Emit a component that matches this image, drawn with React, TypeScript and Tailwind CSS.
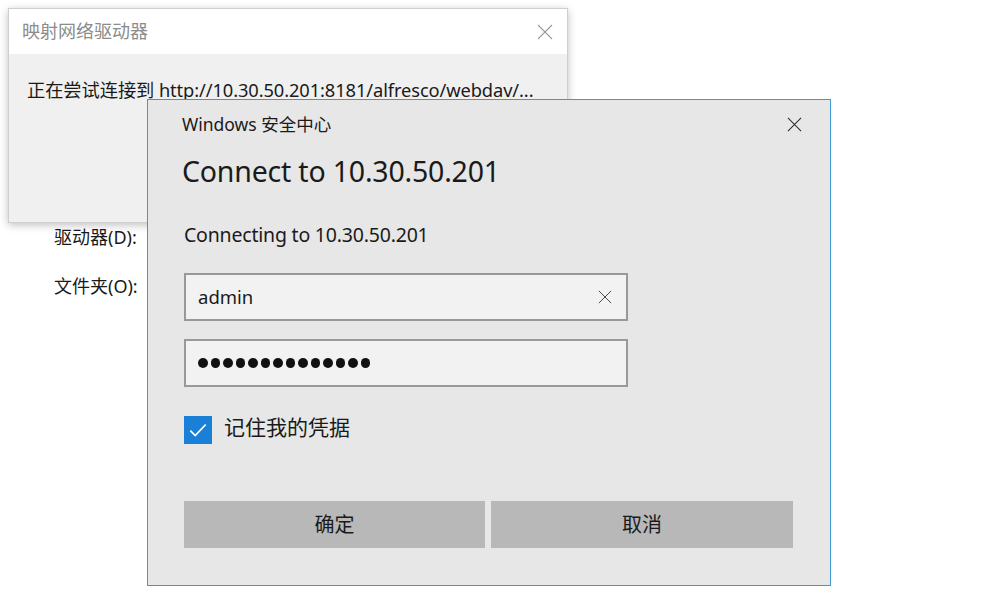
const font = {
    fontFamily: '"Noto Sans", "Noto Sans CJK SC", sans-serif',
}

function CloseIcon({ className }: { className: string }) {
    return (
        <svg viewBox="0 0 16 16" className={className} fill="none" stroke="currentColor" strokeWidth={1.1}>
            <path d="M1 1L15 15M15 1L1 15" />
        </svg>
    )
}

// the progress window that sits behind the credential prompt
function MapDriveWindow() {
    return (
        <div className="absolute left-[8px] top-[8px] w-[560px] h-[215px] flex flex-col border border-[#cfcfcf] bg-[#f0f0f0] shadow-[0_2px_8px_rgba(0,0,0,0.25)]">
            <div className="h-[45px] bg-white flex items-center justify-between pl-[13px] pr-[14px]">
                <span className="text-[18px] text-[#8c8c8c]">映射网络驱动器</span>
                <CloseIcon className="w-[16px] h-[16px] text-[#9a9a9a]" />
            </div>
            <div className="pl-[18px] pt-[22px] text-[18.3px] text-[#1a1a1a] whitespace-nowrap tracking-[-0.1px]">
                正在尝试连接到 http://10.30.50.201:8181/alfresco/webdav/...
            </div>
        </div>
    )
}

function SecurityDialog() {
    return (
        <div className="absolute left-[147px] top-[99px] w-[684px] h-[487px] border border-[#3d9ad1] bg-[#e7e7e7] flex flex-col pl-[36px] pr-[36px]">
            <div className="flex items-center justify-between h-[49px]">
                <span className="text-[17.5px] text-[#1a1a1a] -ml-[2px] -mt-[1px]">Windows 安全中心</span>
                <CloseIcon className="w-[15px] h-[15px] text-[#2a2a2a] -mr-[8px] -mt-[1px]" />
            </div>
            <div className="text-[28.5px] text-[#1a1a1a] leading-[36px] -ml-[2px] mt-[4px] tracking-[-0.2px]">
                Connect to 10.30.50.201
            </div>
            <div className="text-[19.5px] text-[#1a1a1a] leading-[26px] mt-[33px] tracking-[-0.2px]">
                Connecting to 10.30.50.201
            </div>
            <div className="mt-[25px] w-[444px] h-[48px] border-2 border-[#999999] bg-[#f2f2f2] flex items-center justify-between pl-[12px] pr-[14px]">
                <span className="text-[18.5px] text-[#1a1a1a]">admin</span>
                <CloseIcon className="w-[14px] h-[14px] text-[#444444]" />
            </div>
            <div className="mt-[18px] w-[444px] h-[48px] border-2 border-[#999999] bg-[#f2f2f2] flex items-center pl-[12px]">
                <div className="flex gap-[3px]">
                    {Array.from({ length: 14 }).map((_, i) => (
                        <span key={i} className="w-[9.5px] h-[9.5px] rounded-full bg-[#111111]" />
                    ))}
                </div>
            </div>
            <div className="mt-[29px] flex items-center gap-[12px]">
                <div className="w-[28px] h-[28px] bg-[#1a7fd6] flex items-center justify-center">
                    <svg viewBox="0 0 20 20" className="w-[22px] h-[22px]" fill="none" stroke="white" strokeWidth={1.6}>
                        <path d="M3 10.5L7.5 15L17 5" />
                    </svg>
                </div>
                <span className="text-[21px] text-[#1a1a1a] -mt-[4px]">记住我的凭据</span>
            </div>
            <div className="mt-[57px] flex gap-[6px]">
                <div className="w-[301px] h-[47px] bg-[#b8b8b8] flex items-center justify-center text-[20px] text-[#1a1a1a]">
                    确定
                </div>
                <div className="w-[302px] h-[47px] bg-[#b8b8b8] flex items-center justify-center text-[20px] text-[#1a1a1a]">
                    取消
                </div>
            </div>
        </div>
    )
}

export default function App() {
    return (
        <main className="relative w-[1005px] h-[595px] bg-white overflow-hidden" style={font}>
            <div className="flex flex-col gap-[22px] pl-[54px] pt-[224px] text-[18px] text-[#1a1a1a]">
                <span>驱动器(D):</span>
                <span>文件夹(O):</span>
            </div>
            <MapDriveWindow />
            <SecurityDialog />
        </main>
    )
}
